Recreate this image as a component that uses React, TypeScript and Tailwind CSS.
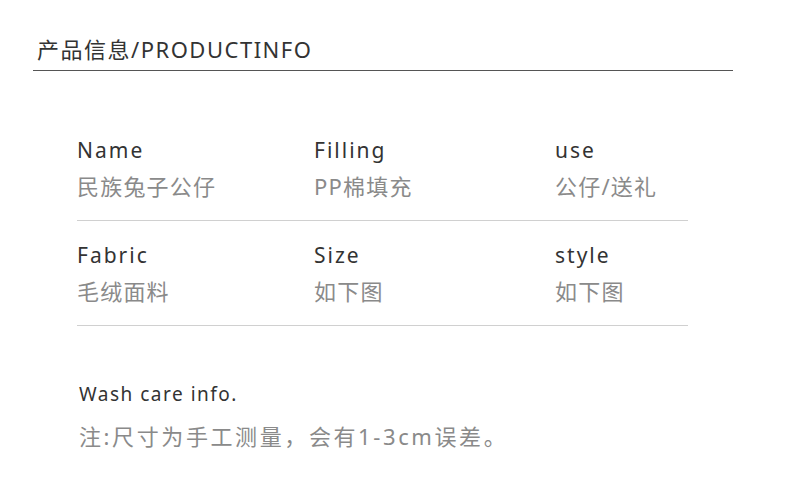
export default function App() {
  const rows = [
    [
      ["Name", "民族兔子公仔"],
      ["Filling", "PP棉填充"],
      ["use", "公仔/送礼"],
    ],
    [
      ["Fabric", "毛绒面料"],
      ["Size", "如下图"],
      ["style", "如下图"],
    ],
  ];
  return (
    <div
      className="w-[790px] h-[500px] bg-white overflow-hidden"
      style={{ fontFamily: '"Noto Sans", "Noto Sans CJK SC", sans-serif' }}
    >
      <div className="pt-[34px] pl-[33px] w-[733px]">
        <div className="pl-[4px] text-[22px] leading-[30px] text-[#333] tracking-[1.5px] h-[36px]">
          产品信息/PRODUCTINFO
        </div>
        <div className="h-px bg-[#555]" />
      </div>
      <div className="ml-[77px] w-[611px] mt-[65px]">
        {rows.map((row, i) => (
          <div key={i} className="border-b border-[#d0d0d0] grid grid-cols-[237px_241px_1fr] pb-[20px] mb-[20px]">
            {row.map(([label, value]) => (
              <div key={label} className="flex flex-col">
                <div className="text-[21px] leading-[28px] text-[#333] tracking-[2px]">{label}</div>
                <div className="mt-[8px] text-[22px] leading-[28px] text-[#8a8a8a] tracking-[1.2px]">{value}</div>
              </div>
            ))}
          </div>
        ))}
      </div>
      <div className="ml-[79px] mt-[56px]">
        <div className="text-[19px] leading-[24px] text-[#333] tracking-[1.5px]">Wash care info.</div>
        <div className="mt-[15px] text-[22px] leading-[30px] text-[#8a8a8a] tracking-[2.6px]">
          注:尺寸为手工测量，会有1-3cm误差。
        </div>
      </div>
    </div>
  );
}
